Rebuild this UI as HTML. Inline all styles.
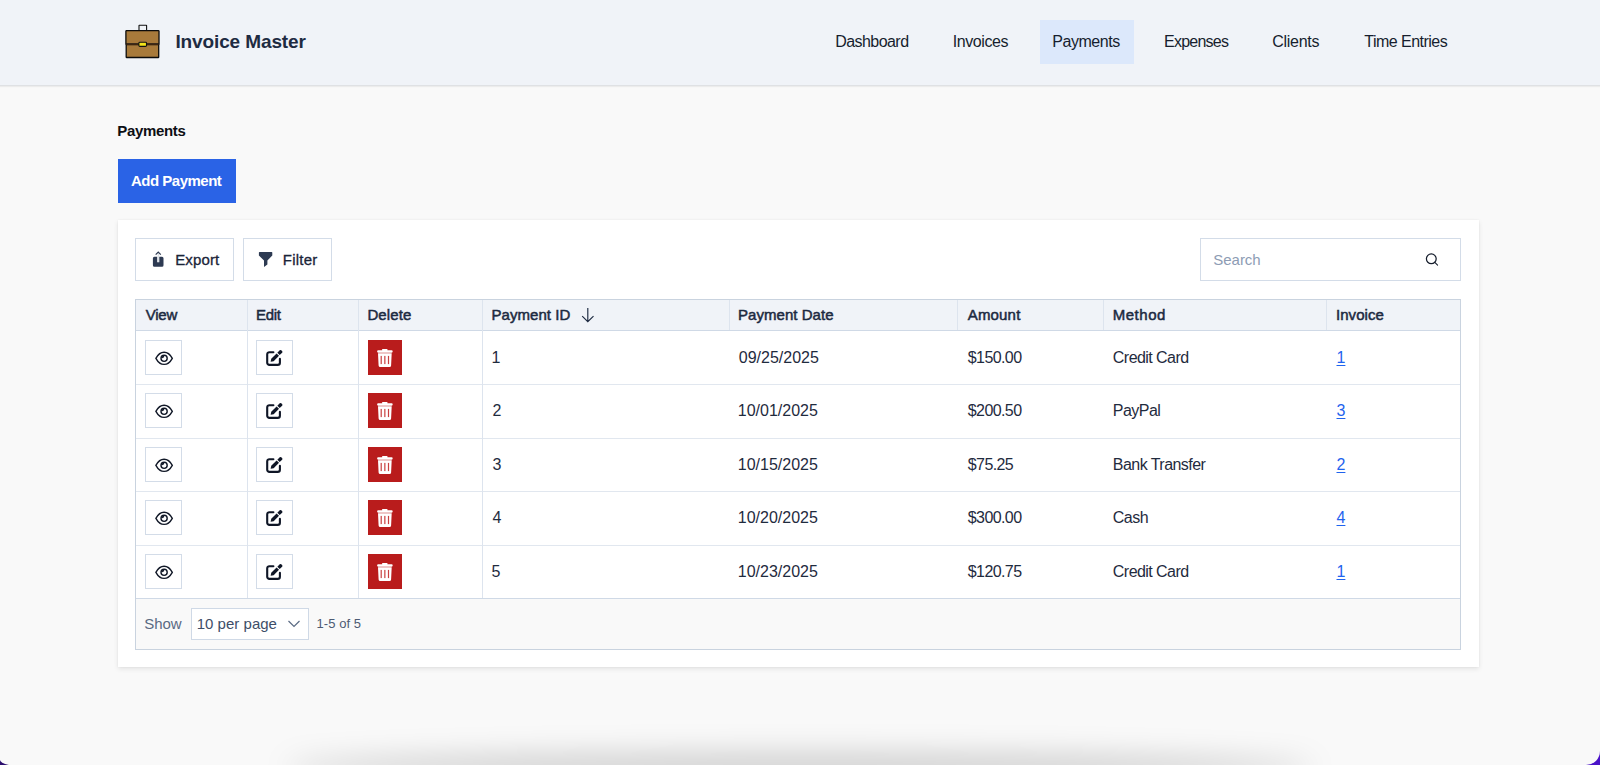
<!DOCTYPE html>
<html>
<head>
<meta charset="utf-8">
<style>
*{box-sizing:border-box;margin:0;padding:0}
html,body{width:1600px;height:765px;overflow:hidden}
body{background:#f9f9f9;font-family:"Liberation Sans",sans-serif;position:relative}
.abs{position:absolute}
.t{position:absolute;white-space:nowrap}
.ico{position:absolute;line-height:0}
.ibtn{position:absolute;width:37px;height:35px;border:1px solid #d3dce8;background:#fff}
.dbtn{position:absolute;width:34px;height:35px;background:#b91c1c}
</style>
</head>
<body>
<div class="abs" style="left:0;top:0;width:1600px;height:86px;background:#f0f3f8;border-bottom:1px solid #dfe1e4;box-shadow:0 1px 1px rgba(0,0,0,0.05)"></div>
<!-- briefcase -->
<svg class="abs" style="left:120px;top:20px" width="44" height="42" viewBox="0 0 44 42">
  <path d="M19 10.5 V5.6 Q19 5.2 19.4 5.2 H26.2 Q26.6 5.2 26.6 5.6 V10.5" fill="none" stroke="#111" stroke-width="1.1"/>
  <path d="M5.9 11.2 Q5.9 10.6 6.5 10.6 H38.4 Q39 10.6 39 11.2 V23.8 H5.9 Z" fill="#a87a3b" stroke="#0b0b0b" stroke-width="1.3"/>
  <path d="M6.2 24.6 H38.7 V36.9 Q38.7 37.5 38.1 37.5 H6.8 Q6.2 37.5 6.2 36.9 Z" fill="#a87a3b" stroke="#0b0b0b" stroke-width="1.3"/>
  <rect x="6.2" y="23.6" width="32.5" height="1.2" fill="#4a2c12"/>
  <rect x="18.9" y="22.2" width="7.6" height="4.2" fill="#f3e31a" stroke="#111" stroke-width="1.1" rx="0.9"/>
</svg>
<div class="abs" style="left:1040px;top:20px;width:94px;height:44px;background:#dce8fb"></div>
<div class="abs" style="left:118px;top:159px;width:117.5px;height:43.5px;background:#2a63e6"></div>
<div class="abs" style="left:118px;top:220px;width:1361px;height:447px;background:#fff;box-shadow:0 2px 5px rgba(0,0,0,0.09),0 0 2px rgba(0,0,0,0.05)"></div>
<div class="abs" style="left:135px;top:238px;width:99px;height:43px;border:1px solid #d3dce8;background:#fff"></div>
<div class="abs" style="left:243px;top:238px;width:89px;height:43px;border:1px solid #d3dce8;background:#fff"></div>
<div class="abs" style="left:1200px;top:238px;width:261px;height:43px;border:1px solid #d3dce8;background:#fff"></div>
<div class="abs" style="left:136px;top:300px;width:1324px;height:30px;background:#f0f3f8"></div>
<div class="abs" style="left:136px;top:599px;width:1324px;height:50px;background:#f9f9f9"></div>
<div class="abs" style="left:135px;top:299px;width:1326px;height:351px;border:1px solid #c9d3df"></div>
<div class="abs" style="left:136px;top:330px;width:1324px;height:1px;background:#cfd9e6"></div>
<div class="abs" style="left:136px;top:598px;width:1324px;height:1px;background:#cfd9e6"></div>
<div class="abs" style="left:136px;top:384.0px;width:1324px;height:1px;background:#e1e7ef"></div>
<div class="abs" style="left:136px;top:437.5px;width:1324px;height:1px;background:#e1e7ef"></div>
<div class="abs" style="left:136px;top:491.0px;width:1324px;height:1px;background:#e1e7ef"></div>
<div class="abs" style="left:136px;top:544.5px;width:1324px;height:1px;background:#e1e7ef"></div>
<div class="abs" style="left:246.5px;top:300px;width:1px;height:298px;background:#dde4ee"></div>
<div class="abs" style="left:357.5px;top:300px;width:1px;height:298px;background:#dde4ee"></div>
<div class="abs" style="left:482.0px;top:300px;width:1px;height:298px;background:#dde4ee"></div>
<div class="abs" style="left:728.9px;top:300px;width:1px;height:30px;background:#dde4ee"></div>
<div class="abs" style="left:956.8px;top:300px;width:1px;height:30px;background:#dde4ee"></div>
<div class="abs" style="left:1102.9px;top:300px;width:1px;height:30px;background:#dde4ee"></div>
<div class="abs" style="left:1326.1px;top:300px;width:1px;height:30px;background:#dde4ee"></div>
<svg class="abs" style="left:580px;top:307px" width="16" height="16" viewBox="0 0 16 16"><path d="M7.8 1.1 V14.2 M2.2 9.2 L7.8 14.6 L13.5 9.1" fill="none" stroke="#1c2940" stroke-width="1.15"/></svg>
<div class="ibtn" style="left:145px;top:339.8px"><div class="ico" style="left:9px;top:10px"><svg width="19" height="15" viewBox="0 0 19 15"><path d="M0.9 7.3 C3.2 3 5.9 1.2 9.1 1.2 C12.3 1.2 15 3 17.3 7.3 C15 11.5 12.3 13.4 9.1 13.4 C5.9 13.4 3.2 11.5 0.9 7.3 Z" fill="none" stroke="#111827" stroke-width="1.4"/><circle cx="9.1" cy="7.3" r="3.1" fill="none" stroke="#111827" stroke-width="1.4"/><path d="M7.2 5.2 A2.4 2.4 0 0 1 9.3 4.6 L9 6.6 A1.2 1.2 0 0 0 7.6 7.3 L6.6 7.1 Z" fill="#111827"/></svg></div></div>
<div class="ibtn" style="left:256px;top:339.8px"><div class="ico" style="left:9px;top:8px"><svg width="19" height="19" viewBox="0 0 19 19"><path d="M7.4 3.2 H3.4 A2.2 2.2 0 0 0 1.2 5.4 V13.7 A2.2 2.2 0 0 0 3.4 15.9 H11.7 A2.2 2.2 0 0 0 13.9 13.7 V9.9" fill="none" stroke="#0f1626" stroke-width="2.1" stroke-linecap="round"/><path d="M4.6 12.8 L5.24 9.76 L10.61 4.39 L13.01 6.79 L7.64 12.16 Z" fill="#0f1626"/><path d="M11.32 3.68 L13.72 1.28 Q14.5 0.5 15.3 1.3 L16.2 2.2 Q16.9 3 16.12 3.68 L13.72 6.08 Z" fill="#0f1626"/></svg></div></div>
<div class="dbtn" style="left:368px;top:339.8px"><div class="ico" style="left:9px;top:9px"><svg width="17" height="19" viewBox="0 0 17 19"><rect x="0.1" y="1.3" width="15.6" height="2.4" rx="1.1" fill="#fff"/><rect x="5" y="0" width="5.6" height="2" rx="0.8" fill="#fff"/><path d="M1.0 4.3 H14.7 L14.1 16.5 A1.6 1.6 0 0 1 12.5 18 H3.2 A1.6 1.6 0 0 1 1.6 16.5 Z" fill="#fff"/><rect x="3.6" y="6.9" width="1.2" height="8.2" fill="#c94040"/><rect x="7.25" y="6.9" width="1.2" height="8.2" fill="#c94040"/><rect x="10.9" y="6.9" width="1.2" height="8.2" fill="#c94040"/></svg></div></div>
<div class="ibtn" style="left:145px;top:393.2px"><div class="ico" style="left:9px;top:10px"><svg width="19" height="15" viewBox="0 0 19 15"><path d="M0.9 7.3 C3.2 3 5.9 1.2 9.1 1.2 C12.3 1.2 15 3 17.3 7.3 C15 11.5 12.3 13.4 9.1 13.4 C5.9 13.4 3.2 11.5 0.9 7.3 Z" fill="none" stroke="#111827" stroke-width="1.4"/><circle cx="9.1" cy="7.3" r="3.1" fill="none" stroke="#111827" stroke-width="1.4"/><path d="M7.2 5.2 A2.4 2.4 0 0 1 9.3 4.6 L9 6.6 A1.2 1.2 0 0 0 7.6 7.3 L6.6 7.1 Z" fill="#111827"/></svg></div></div>
<div class="ibtn" style="left:256px;top:393.2px"><div class="ico" style="left:9px;top:8px"><svg width="19" height="19" viewBox="0 0 19 19"><path d="M7.4 3.2 H3.4 A2.2 2.2 0 0 0 1.2 5.4 V13.7 A2.2 2.2 0 0 0 3.4 15.9 H11.7 A2.2 2.2 0 0 0 13.9 13.7 V9.9" fill="none" stroke="#0f1626" stroke-width="2.1" stroke-linecap="round"/><path d="M4.6 12.8 L5.24 9.76 L10.61 4.39 L13.01 6.79 L7.64 12.16 Z" fill="#0f1626"/><path d="M11.32 3.68 L13.72 1.28 Q14.5 0.5 15.3 1.3 L16.2 2.2 Q16.9 3 16.12 3.68 L13.72 6.08 Z" fill="#0f1626"/></svg></div></div>
<div class="dbtn" style="left:368px;top:393.2px"><div class="ico" style="left:9px;top:9px"><svg width="17" height="19" viewBox="0 0 17 19"><rect x="0.1" y="1.3" width="15.6" height="2.4" rx="1.1" fill="#fff"/><rect x="5" y="0" width="5.6" height="2" rx="0.8" fill="#fff"/><path d="M1.0 4.3 H14.7 L14.1 16.5 A1.6 1.6 0 0 1 12.5 18 H3.2 A1.6 1.6 0 0 1 1.6 16.5 Z" fill="#fff"/><rect x="3.6" y="6.9" width="1.2" height="8.2" fill="#c94040"/><rect x="7.25" y="6.9" width="1.2" height="8.2" fill="#c94040"/><rect x="10.9" y="6.9" width="1.2" height="8.2" fill="#c94040"/></svg></div></div>
<div class="ibtn" style="left:145px;top:446.8px"><div class="ico" style="left:9px;top:10px"><svg width="19" height="15" viewBox="0 0 19 15"><path d="M0.9 7.3 C3.2 3 5.9 1.2 9.1 1.2 C12.3 1.2 15 3 17.3 7.3 C15 11.5 12.3 13.4 9.1 13.4 C5.9 13.4 3.2 11.5 0.9 7.3 Z" fill="none" stroke="#111827" stroke-width="1.4"/><circle cx="9.1" cy="7.3" r="3.1" fill="none" stroke="#111827" stroke-width="1.4"/><path d="M7.2 5.2 A2.4 2.4 0 0 1 9.3 4.6 L9 6.6 A1.2 1.2 0 0 0 7.6 7.3 L6.6 7.1 Z" fill="#111827"/></svg></div></div>
<div class="ibtn" style="left:256px;top:446.8px"><div class="ico" style="left:9px;top:8px"><svg width="19" height="19" viewBox="0 0 19 19"><path d="M7.4 3.2 H3.4 A2.2 2.2 0 0 0 1.2 5.4 V13.7 A2.2 2.2 0 0 0 3.4 15.9 H11.7 A2.2 2.2 0 0 0 13.9 13.7 V9.9" fill="none" stroke="#0f1626" stroke-width="2.1" stroke-linecap="round"/><path d="M4.6 12.8 L5.24 9.76 L10.61 4.39 L13.01 6.79 L7.64 12.16 Z" fill="#0f1626"/><path d="M11.32 3.68 L13.72 1.28 Q14.5 0.5 15.3 1.3 L16.2 2.2 Q16.9 3 16.12 3.68 L13.72 6.08 Z" fill="#0f1626"/></svg></div></div>
<div class="dbtn" style="left:368px;top:446.8px"><div class="ico" style="left:9px;top:9px"><svg width="17" height="19" viewBox="0 0 17 19"><rect x="0.1" y="1.3" width="15.6" height="2.4" rx="1.1" fill="#fff"/><rect x="5" y="0" width="5.6" height="2" rx="0.8" fill="#fff"/><path d="M1.0 4.3 H14.7 L14.1 16.5 A1.6 1.6 0 0 1 12.5 18 H3.2 A1.6 1.6 0 0 1 1.6 16.5 Z" fill="#fff"/><rect x="3.6" y="6.9" width="1.2" height="8.2" fill="#c94040"/><rect x="7.25" y="6.9" width="1.2" height="8.2" fill="#c94040"/><rect x="10.9" y="6.9" width="1.2" height="8.2" fill="#c94040"/></svg></div></div>
<div class="ibtn" style="left:145px;top:500.2px"><div class="ico" style="left:9px;top:10px"><svg width="19" height="15" viewBox="0 0 19 15"><path d="M0.9 7.3 C3.2 3 5.9 1.2 9.1 1.2 C12.3 1.2 15 3 17.3 7.3 C15 11.5 12.3 13.4 9.1 13.4 C5.9 13.4 3.2 11.5 0.9 7.3 Z" fill="none" stroke="#111827" stroke-width="1.4"/><circle cx="9.1" cy="7.3" r="3.1" fill="none" stroke="#111827" stroke-width="1.4"/><path d="M7.2 5.2 A2.4 2.4 0 0 1 9.3 4.6 L9 6.6 A1.2 1.2 0 0 0 7.6 7.3 L6.6 7.1 Z" fill="#111827"/></svg></div></div>
<div class="ibtn" style="left:256px;top:500.2px"><div class="ico" style="left:9px;top:8px"><svg width="19" height="19" viewBox="0 0 19 19"><path d="M7.4 3.2 H3.4 A2.2 2.2 0 0 0 1.2 5.4 V13.7 A2.2 2.2 0 0 0 3.4 15.9 H11.7 A2.2 2.2 0 0 0 13.9 13.7 V9.9" fill="none" stroke="#0f1626" stroke-width="2.1" stroke-linecap="round"/><path d="M4.6 12.8 L5.24 9.76 L10.61 4.39 L13.01 6.79 L7.64 12.16 Z" fill="#0f1626"/><path d="M11.32 3.68 L13.72 1.28 Q14.5 0.5 15.3 1.3 L16.2 2.2 Q16.9 3 16.12 3.68 L13.72 6.08 Z" fill="#0f1626"/></svg></div></div>
<div class="dbtn" style="left:368px;top:500.2px"><div class="ico" style="left:9px;top:9px"><svg width="17" height="19" viewBox="0 0 17 19"><rect x="0.1" y="1.3" width="15.6" height="2.4" rx="1.1" fill="#fff"/><rect x="5" y="0" width="5.6" height="2" rx="0.8" fill="#fff"/><path d="M1.0 4.3 H14.7 L14.1 16.5 A1.6 1.6 0 0 1 12.5 18 H3.2 A1.6 1.6 0 0 1 1.6 16.5 Z" fill="#fff"/><rect x="3.6" y="6.9" width="1.2" height="8.2" fill="#c94040"/><rect x="7.25" y="6.9" width="1.2" height="8.2" fill="#c94040"/><rect x="10.9" y="6.9" width="1.2" height="8.2" fill="#c94040"/></svg></div></div>
<div class="ibtn" style="left:145px;top:553.8px"><div class="ico" style="left:9px;top:10px"><svg width="19" height="15" viewBox="0 0 19 15"><path d="M0.9 7.3 C3.2 3 5.9 1.2 9.1 1.2 C12.3 1.2 15 3 17.3 7.3 C15 11.5 12.3 13.4 9.1 13.4 C5.9 13.4 3.2 11.5 0.9 7.3 Z" fill="none" stroke="#111827" stroke-width="1.4"/><circle cx="9.1" cy="7.3" r="3.1" fill="none" stroke="#111827" stroke-width="1.4"/><path d="M7.2 5.2 A2.4 2.4 0 0 1 9.3 4.6 L9 6.6 A1.2 1.2 0 0 0 7.6 7.3 L6.6 7.1 Z" fill="#111827"/></svg></div></div>
<div class="ibtn" style="left:256px;top:553.8px"><div class="ico" style="left:9px;top:8px"><svg width="19" height="19" viewBox="0 0 19 19"><path d="M7.4 3.2 H3.4 A2.2 2.2 0 0 0 1.2 5.4 V13.7 A2.2 2.2 0 0 0 3.4 15.9 H11.7 A2.2 2.2 0 0 0 13.9 13.7 V9.9" fill="none" stroke="#0f1626" stroke-width="2.1" stroke-linecap="round"/><path d="M4.6 12.8 L5.24 9.76 L10.61 4.39 L13.01 6.79 L7.64 12.16 Z" fill="#0f1626"/><path d="M11.32 3.68 L13.72 1.28 Q14.5 0.5 15.3 1.3 L16.2 2.2 Q16.9 3 16.12 3.68 L13.72 6.08 Z" fill="#0f1626"/></svg></div></div>
<div class="dbtn" style="left:368px;top:553.8px"><div class="ico" style="left:9px;top:9px"><svg width="17" height="19" viewBox="0 0 17 19"><rect x="0.1" y="1.3" width="15.6" height="2.4" rx="1.1" fill="#fff"/><rect x="5" y="0" width="5.6" height="2" rx="0.8" fill="#fff"/><path d="M1.0 4.3 H14.7 L14.1 16.5 A1.6 1.6 0 0 1 12.5 18 H3.2 A1.6 1.6 0 0 1 1.6 16.5 Z" fill="#fff"/><rect x="3.6" y="6.9" width="1.2" height="8.2" fill="#c94040"/><rect x="7.25" y="6.9" width="1.2" height="8.2" fill="#c94040"/><rect x="10.9" y="6.9" width="1.2" height="8.2" fill="#c94040"/></svg></div></div>
<div class="abs" style="left:191px;top:608px;width:118px;height:32px;border:1px solid #cfd9e6;background:#fff"></div>
<svg class="abs" style="left:287px;top:619px" width="14" height="10" viewBox="0 0 14 10"><path d="M1.5 2 L7 7.5 L12.5 2" fill="none" stroke="#5b6b84" stroke-width="1.2"/></svg>
<!-- export icon -->
<svg class="abs" style="left:151px;top:251px" width="14" height="17" viewBox="0 0 14 17"><path d="M3.4 5.7 H6.2 V11.3 H8.3 V5.7 H11 A1.5 1.5 0 0 1 12.5 7.2 V14.2 A1.5 1.5 0 0 1 11 15.7 H3.4 A1.5 1.5 0 0 1 1.9 14.2 V7.2 A1.5 1.5 0 0 1 3.4 5.7 Z" fill="#2d3a52"/><path d="M7.25 1.6 V11" stroke="#c9d0da" stroke-width="0.8"/><path d="M4.7 3.6 L7.25 1.1 L9.8 3.6" fill="none" stroke="#2d3a52" stroke-width="1.2"/></svg>
<!-- filter icon -->
<svg class="abs" style="left:258px;top:251px" width="16" height="17" viewBox="0 0 16 17"><path d="M1.6 0.9 H13.6 Q14.3 0.9 14.3 1.6 V4.4 L9.4 9.5 V13.4 L6 15.9 V9.5 L0.9 4.4 V1.6 Q0.9 0.9 1.6 0.9 Z" fill="#2d3a52"/></svg>
<!-- search icon -->
<svg class="abs" style="left:1424px;top:251px" width="16" height="16" viewBox="0 0 16 16"><circle cx="7.3" cy="7.8" r="4.9" fill="none" stroke="#141c2b" stroke-width="1.25"/><path d="M10.8 11.3 L13.6 14.1" stroke="#141c2b" stroke-width="1.05" stroke-linecap="round"/></svg>
<div class="t" style="left:175.40px;top:32.00px;font-size:19px;font-weight:bold;line-height:19px;color:#1e2b42;letter-spacing:-0.115px;">Invoice Master</div>
<div class="t" style="left:835.25px;top:34.00px;font-size:16px;font-weight:normal;line-height:16px;color:#161e2e;letter-spacing:-0.562px;">Dashboard</div>
<div class="t" style="left:952.75px;top:34.00px;font-size:16px;font-weight:normal;line-height:16px;color:#161e2e;letter-spacing:-0.429px;">Invoices</div>
<div class="t" style="left:1052.25px;top:34.00px;font-size:16px;font-weight:normal;line-height:16px;color:#161e2e;letter-spacing:-0.464px;">Payments</div>
<div class="t" style="left:1164.00px;top:34.00px;font-size:16px;font-weight:normal;line-height:16px;color:#161e2e;letter-spacing:-0.750px;">Expenses</div>
<div class="t" style="left:1272.25px;top:34.00px;font-size:16px;font-weight:normal;line-height:16px;color:#161e2e;letter-spacing:-0.292px;">Clients</div>
<div class="t" style="left:1364.25px;top:34.00px;font-size:16px;font-weight:normal;line-height:16px;color:#161e2e;letter-spacing:-0.523px;">Time Entries</div>
<div class="t" style="left:117.20px;top:123.00px;font-size:15px;font-weight:bold;line-height:15px;color:#0d0f14;letter-spacing:-0.314px;">Payments</div>
<div class="t" style="left:131.00px;top:173.00px;font-size:15px;font-weight:bold;line-height:15px;color:#ffffff;letter-spacing:-0.500px;">Add Payment</div>
<div class="t" style="left:175.20px;top:252.00px;font-size:15px;font-weight:normal;line-height:15px;color:#1a2438;letter-spacing:0.140px;-webkit-text-stroke:0.3px #1a2438;">Export</div>
<div class="t" style="left:282.80px;top:252.00px;font-size:15px;font-weight:normal;line-height:15px;color:#1a2438;letter-spacing:0.240px;-webkit-text-stroke:0.3px #1a2438;">Filter</div>
<div class="t" style="left:1213.20px;top:252.00px;font-size:15px;font-weight:normal;line-height:15px;color:#8d9cb4;letter-spacing:0.000px;">Search</div>
<div class="t" style="left:145.70px;top:307.00px;font-size:15px;font-weight:normal;line-height:15px;color:#1c2a41;letter-spacing:-0.200px;-webkit-text-stroke:0.5px #1c2a41;">View</div>
<div class="t" style="left:255.90px;top:307.00px;font-size:15px;font-weight:normal;line-height:15px;color:#1c2a41;letter-spacing:-0.233px;-webkit-text-stroke:0.5px #1c2a41;">Edit</div>
<div class="t" style="left:367.40px;top:307.00px;font-size:15px;font-weight:normal;line-height:15px;color:#1c2a41;letter-spacing:0.120px;-webkit-text-stroke:0.5px #1c2a41;">Delete</div>
<div class="t" style="left:491.50px;top:307.00px;font-size:15px;font-weight:normal;line-height:15px;color:#1c2a41;letter-spacing:0.056px;-webkit-text-stroke:0.5px #1c2a41;">Payment ID</div>
<div class="t" style="left:738.00px;top:307.00px;font-size:15px;font-weight:normal;line-height:15px;color:#1c2a41;letter-spacing:0.045px;-webkit-text-stroke:0.5px #1c2a41;">Payment Date</div>
<div class="t" style="left:967.75px;top:307.00px;font-size:15px;font-weight:normal;line-height:15px;color:#1c2a41;letter-spacing:0.170px;-webkit-text-stroke:0.5px #1c2a41;">Amount</div>
<div class="t" style="left:1112.75px;top:307.00px;font-size:15px;font-weight:normal;line-height:15px;color:#1c2a41;letter-spacing:0.510px;-webkit-text-stroke:0.5px #1c2a41;">Method</div>
<div class="t" style="left:1335.90px;top:307.00px;font-size:15px;font-weight:normal;line-height:15px;color:#1c2a41;letter-spacing:0.083px;-webkit-text-stroke:0.5px #1c2a41;">Invoice</div>
<div class="t" style="left:144.20px;top:616.00px;font-size:15px;font-weight:normal;line-height:15px;color:#5a6a83;letter-spacing:-0.067px;">Show</div>
<div class="t" style="left:196.70px;top:616.00px;font-size:15px;font-weight:normal;line-height:15px;color:#3e4e68;letter-spacing:0.020px;">10 per page</div>
<div class="t" style="left:316.50px;top:617.00px;font-size:13px;font-weight:normal;line-height:13px;color:#4d5b73;letter-spacing:0.071px;">1-5 of 5</div>
<div class="t" style="left:491.60px;top:350.00px;font-size:16px;font-weight:normal;line-height:16px;color:#1f2b3e;letter-spacing:0.000px;">1</div>
<div class="t" style="left:738.75px;top:350.00px;font-size:16px;font-weight:normal;line-height:16px;color:#1f2b3e;letter-spacing:0.000px;">09/25/2025</div>
<div class="t" style="left:967.80px;top:350.00px;font-size:16px;font-weight:normal;line-height:16px;color:#1f2b3e;letter-spacing:-0.600px;">$150.00</div>
<div class="t" style="left:1112.85px;top:350.00px;font-size:16px;font-weight:normal;line-height:16px;color:#1f2b3e;letter-spacing:-0.550px;">Credit Card</div>
<div class="t" style="left:1336.50px;top:350.00px;font-size:16px;font-weight:normal;line-height:16px;color:#1f63ee;letter-spacing:0.000px;text-decoration:underline;text-underline-offset:2px;">1</div>
<div class="t" style="left:492.60px;top:403.00px;font-size:16px;font-weight:normal;line-height:16px;color:#1f2b3e;letter-spacing:0.000px;">2</div>
<div class="t" style="left:737.75px;top:403.00px;font-size:16px;font-weight:normal;line-height:16px;color:#1f2b3e;letter-spacing:0.000px;">10/01/2025</div>
<div class="t" style="left:967.80px;top:403.00px;font-size:16px;font-weight:normal;line-height:16px;color:#1f2b3e;letter-spacing:-0.600px;">$200.50</div>
<div class="t" style="left:1112.85px;top:403.00px;font-size:16px;font-weight:normal;line-height:16px;color:#1f2b3e;letter-spacing:-0.550px;">PayPal</div>
<div class="t" style="left:1336.50px;top:403.00px;font-size:16px;font-weight:normal;line-height:16px;color:#1f63ee;letter-spacing:0.000px;text-decoration:underline;text-underline-offset:2px;">3</div>
<div class="t" style="left:492.60px;top:457.00px;font-size:16px;font-weight:normal;line-height:16px;color:#1f2b3e;letter-spacing:0.000px;">3</div>
<div class="t" style="left:737.75px;top:457.00px;font-size:16px;font-weight:normal;line-height:16px;color:#1f2b3e;letter-spacing:0.000px;">10/15/2025</div>
<div class="t" style="left:967.80px;top:457.00px;font-size:16px;font-weight:normal;line-height:16px;color:#1f2b3e;letter-spacing:-0.600px;">$75.25</div>
<div class="t" style="left:1112.85px;top:457.00px;font-size:16px;font-weight:normal;line-height:16px;color:#1f2b3e;letter-spacing:-0.550px;">Bank Transfer</div>
<div class="t" style="left:1336.50px;top:457.00px;font-size:16px;font-weight:normal;line-height:16px;color:#1f63ee;letter-spacing:0.000px;text-decoration:underline;text-underline-offset:2px;">2</div>
<div class="t" style="left:492.60px;top:510.00px;font-size:16px;font-weight:normal;line-height:16px;color:#1f2b3e;letter-spacing:0.000px;">4</div>
<div class="t" style="left:737.75px;top:510.00px;font-size:16px;font-weight:normal;line-height:16px;color:#1f2b3e;letter-spacing:0.000px;">10/20/2025</div>
<div class="t" style="left:967.80px;top:510.00px;font-size:16px;font-weight:normal;line-height:16px;color:#1f2b3e;letter-spacing:-0.600px;">$300.00</div>
<div class="t" style="left:1112.85px;top:510.00px;font-size:16px;font-weight:normal;line-height:16px;color:#1f2b3e;letter-spacing:-0.550px;">Cash</div>
<div class="t" style="left:1336.50px;top:510.00px;font-size:16px;font-weight:normal;line-height:16px;color:#1f63ee;letter-spacing:0.000px;text-decoration:underline;text-underline-offset:2px;">4</div>
<div class="t" style="left:491.60px;top:564.00px;font-size:16px;font-weight:normal;line-height:16px;color:#1f2b3e;letter-spacing:0.000px;">5</div>
<div class="t" style="left:737.75px;top:564.00px;font-size:16px;font-weight:normal;line-height:16px;color:#1f2b3e;letter-spacing:0.000px;">10/23/2025</div>
<div class="t" style="left:967.80px;top:564.00px;font-size:16px;font-weight:normal;line-height:16px;color:#1f2b3e;letter-spacing:-0.600px;">$120.75</div>
<div class="t" style="left:1112.85px;top:564.00px;font-size:16px;font-weight:normal;line-height:16px;color:#1f2b3e;letter-spacing:-0.550px;">Credit Card</div>
<div class="t" style="left:1336.50px;top:564.00px;font-size:16px;font-weight:normal;line-height:16px;color:#1f63ee;letter-spacing:0.000px;text-decoration:underline;text-underline-offset:2px;">1</div>
<!-- bottom shadow -->
<div class="abs" style="left:285px;top:752px;width:1030px;height:30px;border-radius:50%;background:rgba(0,0,0,0.16);filter:blur(14px)"></div>
<div class="abs" style="left:1560px;top:725px;width:40px;height:40px;background:#4a12c8"></div>
<div class="abs" style="left:1520px;top:685px;width:80px;height:80px;border-radius:0 0 14px 0;background:#f9f9f9;"></div>
<div class="abs" style="left:0px;top:745px;width:20px;height:20px;background:#2b0e6e"></div>
<div class="abs" style="left:0px;top:707px;width:80px;height:60px;border-radius:0 0 0 30px/7px;background:#f9f9f9"></div>
</body>
</html>
